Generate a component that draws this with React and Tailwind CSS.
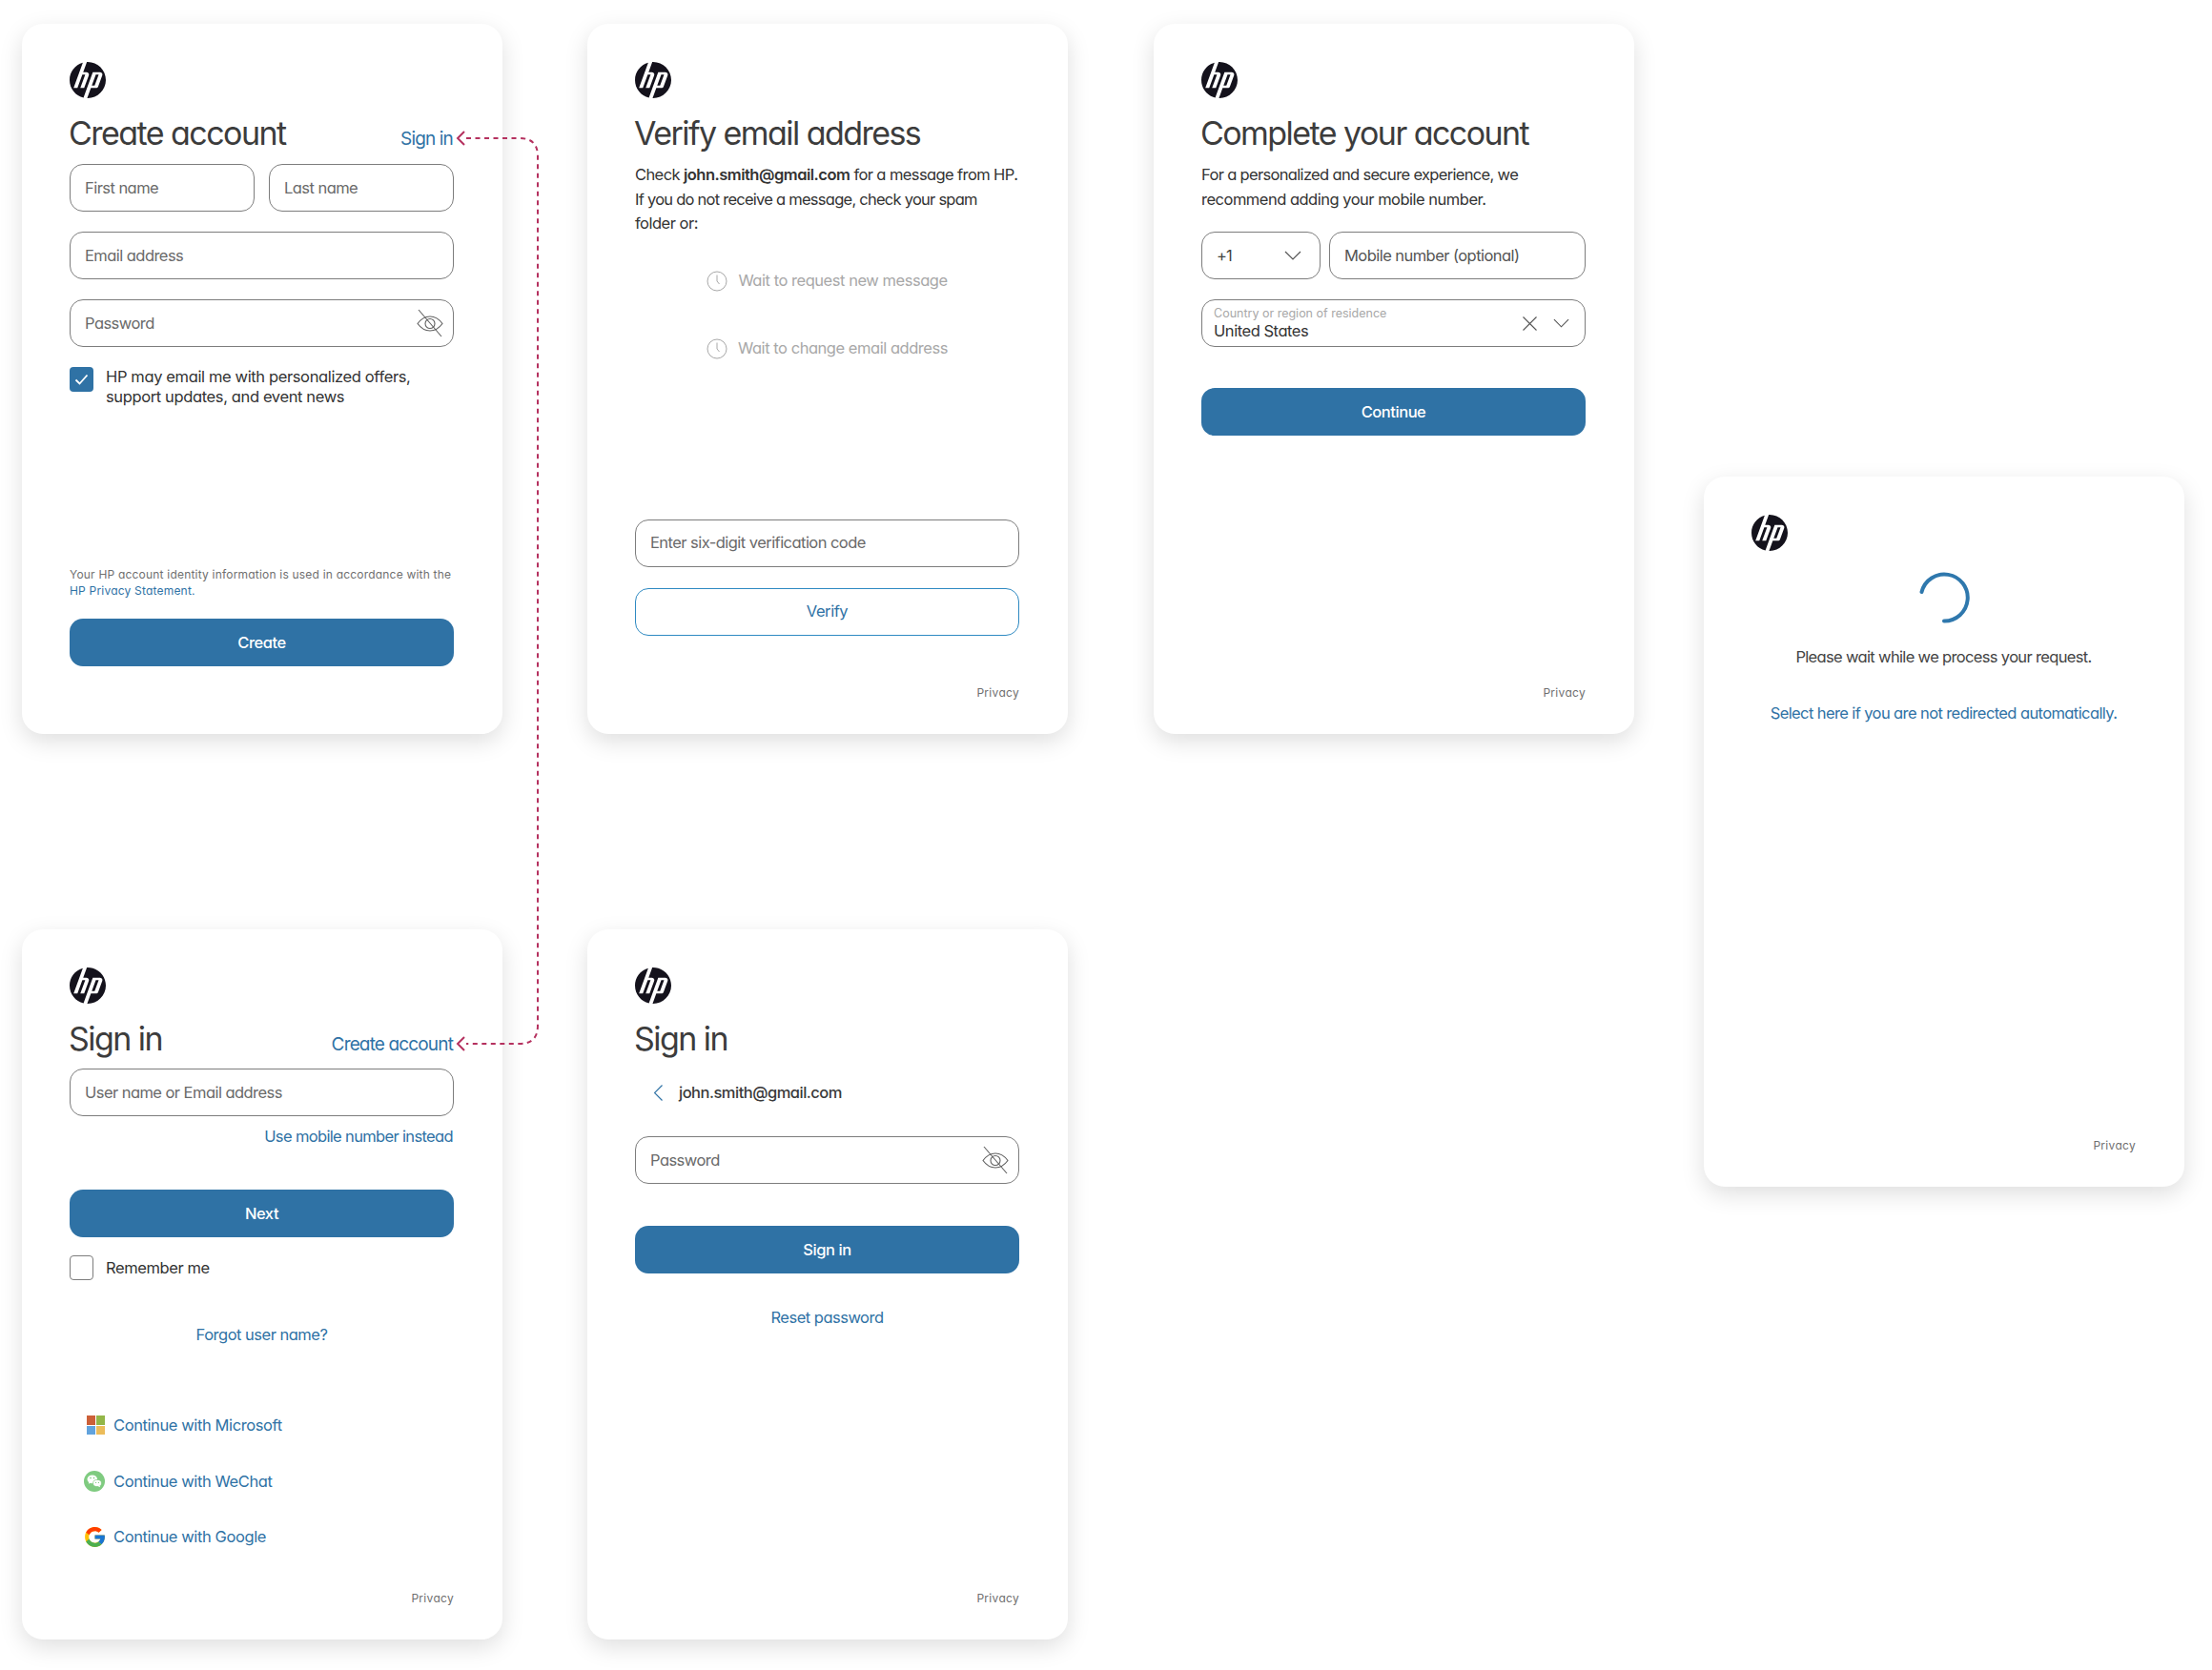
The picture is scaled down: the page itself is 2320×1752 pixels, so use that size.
import React from 'react'
import { SiHp } from 'react-icons/si'
import { FcGoogle } from 'react-icons/fc'

const Logo = () => <SiHp className="w-[38px] h-[38px] text-[#14121c] shrink-0" />

const EyeOff = () => (
  <svg className="w-[30px] h-[30px]" viewBox="0 0 30 30" fill="none" stroke="#5f5f5f" strokeWidth="1.1">
    <path d="M2 15.5C6 10 10 8 15 8s9 2 13 7.5c-4 5.500-8 7.500-13 7.500S6 21 2 15.500z" />
    <circle cx="15" cy="15.500" r="5" />
    <path d="M3 1l24 28" />
  </svg>
)

const Chevron = ({ className }) => (
  <svg className={className} viewBox="0 0 18 10" fill="none" stroke="#555" strokeWidth="1.200">
    <path d="M1 1l8 8 8-8" />
  </svg>
)

const Clock = () => (
  <svg className="w-[22px] h-[22px] shrink-0" viewBox="0 0 22 22" fill="none" stroke="#a8a8a8" strokeWidth="1">
    <circle cx="11" cy="11" r="10" />
    <path d="M11 4.500v6.500l2.500 3" />
  </svg>
)

const Microsoft = () => (
  <div className="w-[19px] h-[20px] grid grid-cols-2 grid-rows-2 gap-px shrink-0">
    <div className="bg-[#cc6038]" />
    <div className="bg-[#93b648]" />
    <div className="bg-[#62a3dd]" />
    <div className="bg-[#ecbc5a]" />
  </div>
)

const WeChat = () => (
  <svg className="w-[22px] h-[22px] shrink-0" viewBox="0 0 22 22">
    <circle cx="11" cy="11" r="11" fill="#7fcb80" />
    <ellipse cx="8.800" cy="8.800" rx="5.300" ry="4.400" fill="#fff" />
    <path d="M5.500 11.500l-.7 2.300 2.600-1.300z" fill="#fff" />
    <ellipse cx="14" cy="13" rx="4.400" ry="3.600" fill="#fff" stroke="#7fcb80" strokeWidth=".7" />
    <path d="M16.500 15.500l.7 1.800-2.300-1.100z" fill="#fff" />
    <circle cx="7" cy="7.600" r=".8" fill="#7fcb80" />
    <circle cx="10.500" cy="7.600" r=".8" fill="#7fcb80" />
    <circle cx="12.600" cy="12.400" r=".6" fill="#7fcb80" />
    <circle cx="15.400" cy="12.400" r=".6" fill="#7fcb80" />
  </svg>
)

const Heading = ({ children, link }) => (
  <div className="mt-[15px] h-[44px] flex justify-between items-baseline">
    <h1 className="text-[34px] leading-[44px] font-normal text-[#3c3c3c] tracking-[-1.55px] -ml-px">{children}</h1>
    {link && <a className="text-[19px] leading-[24px] text-[#2f72a5] tracking-[-0.85px] pr-px">{link}</a>}
  </div>
)

const Field = ({ label, className = '', children }) => (
  <div className={`h-[50px] border border-[#7d7d7d] rounded-[14px] pl-[15px] pr-[9px] flex items-center justify-between text-[16.500px] text-[#6a6a6a] tracking-[-0.55px] ${className}`}>
    <span>{label}</span>
    {children}
  </div>
)

const Button = ({ children, className = '' }) => (
  <button className={`w-full h-[50px] rounded-[14px] bg-[#2f72a5] text-white text-[16.500px] font-medium tracking-[-0.45px] ${className}`}>
    {children}
  </button>
)

const Privacy = () => (
  <div className="mt-auto text-right text-[12px] leading-[16px] tracking-[0.3px] text-[#6f6f6f]">Privacy</div>
)

const Card = ({ children, className = '' }) => (
  <div className={`w-[504px] h-[745px] bg-white rounded-[22px] shadow-[0_8px_24px_rgba(0,0,0,0.13)] pl-[50px] pr-[51px] pt-[40px] pb-[35px] flex flex-col ${className}`}>
    {children}
  </div>
)

const Check = () => (
  <div className="w-[25px] h-[26px] rounded-[4px] bg-[#2f72a5] flex items-center justify-center shrink-0">
    <svg className="w-[15px] h-[12px]" viewBox="0 0 15 12" fill="none" stroke="#fff" strokeWidth="1.800">
      <path d="M1.500 6.500l4 4 8-9" />
    </svg>
  </div>
)

const Social = ({ icon, label, className = '' }) => (
  <div className={`h-[24px] pl-[15px] flex items-center text-[16.500px] text-[#2f72a5] tracking-[-0.4px] ${className}`}>
    <span className="w-[22px] mr-[9px] flex justify-end">{icon}</span>
    {label}
  </div>
)

const Arrows = () => (
  <svg className="absolute inset-0 pointer-events-none" width="2320" height="1752" fill="none" stroke="#b5315f">
    <path d="M489 145H545Q564 145 564 164V1076Q564 1095 545 1095H489" strokeWidth="2" strokeDasharray="5 4.500" />
    <path d="M487 138l-7 7 7 7M487 1088l-7 7 7 7" strokeWidth="2" />
  </svg>
)

export default function App() {
  return (
    <div className="relative w-[2320px] h-[1752px] bg-white overflow-hidden pl-[23px] pt-[25px] flex font-['Inter','Noto_Sans',sans-serif] [font-feature-settings:'cv11']">
      <div className="grid grid-cols-[503px_504px_504px] gap-x-[90px] gap-y-[205px] content-start">
        <Card>
          <Logo />
          <Heading link="Sign in">Create account</Heading>
          <div className="mt-[10px] grid grid-cols-2 gap-[15px]">
            <Field label="First name" />
            <Field label="Last name" />
          </div>
          <Field label="Email address" className="mt-[21px]" />
          <Field label="Password" className="mt-[21px]"><EyeOff /></Field>
          <div className="mt-[21px] flex gap-[13px]">
            <Check />
            <p className="text-[16.500px] leading-[21px] text-[#333] tracking-[-0.37px]">
              HP may email me with personalized offers,<br />support updates, and event news
            </p>
          </div>
          <p className="mt-auto text-[12px] leading-[17px] tracking-[0.2px] text-[#6f6f6f]">
            Your HP account identity information is used in accordance with the<br />
            <a className="text-[#2f72a5]">HP Privacy Statement.</a>
          </p>
          <Button className="mt-[21px] mb-[36px]">Create</Button>
        </Card>

        <Card>
          <Logo />
          <Heading>Verify email address</Heading>
          <p className="mt-[9px] text-[16.500px] leading-[25.500px] text-[#333] tracking-[-0.5px] whitespace-nowrap">
            <span className="tracking-[-0.6px]">Check <b className="font-semibold tracking-[-0.5px]">john.smith@gmail.com</b> for a message from HP.</span><br />
            <span className="tracking-[-0.75px]">If you do not receive a message, check your spam</span><br />folder or:
          </p>
          <div className="mt-[35px] flex justify-center items-center gap-[11px] h-[24px] text-[16.500px] text-[#a8a8a8] tracking-[-0.46px]">
            <Clock />Wait to request new message
          </div>
          <div className="mt-[47px] flex justify-center items-center gap-[11px] h-[24px] text-[16.500px] text-[#a8a8a8] tracking-[-0.46px]">
            <Clock />Wait to change email address
          </div>
          <Field label="Enter six-digit verification code" className="mt-[167px]" />
          <button className="mt-[22px] w-full h-[50px] rounded-[14px] border border-[#2f8ac2] text-[#2f72a5] text-[16.500px] tracking-[-0.45px]">
            Verify
          </button>
          <Privacy />
        </Card>

        <Card>
          <Logo />
          <Heading>Complete your account</Heading>
          <p className="mt-[9px] text-[16.500px] leading-[25.500px] text-[#333] tracking-[-0.5px] whitespace-nowrap">
            <span className="tracking-[-0.67px]">For a personalized and secure experience, we</span><br />recommend adding your mobile number.
          </p>
          <div className="mt-[21px] flex gap-[9px]">
            <Field label="+1" className="w-[125px] shrink-0 text-[#444] pr-[19px] tracking-[-1px]">
              <Chevron className="w-[18px] h-[10px]" />
            </Field>
            <Field label="Mobile number (optional)" className="flex-1 text-[#555] tracking-[-0.45px]" />
          </div>
          <div className="mt-[21px] h-[50px] border border-[#7d7d7d] rounded-[14px] pl-[12px] pr-[16px] flex items-center justify-between">
            <div>
              <div className="text-[12.500px] leading-[16px] text-[#a8a8a8] tracking-[0px]">Country or region of residence</div>
              <div className="text-[16.500px] leading-[20px] text-[#333] tracking-[-0.45px]">United States</div>
            </div>
            <div className="flex items-center gap-[17px]">
              <svg className="w-[15px] h-[15px]" viewBox="0 0 15 15" stroke="#555" strokeWidth="1.100">
                <path d="M0.500 0.500l14 14M14.500 0.500l-14 14" />
              </svg>
              <Chevron className="w-[17px] h-[10px]" />
            </div>
          </div>
          <Button className="mt-[43px]">Continue</Button>
          <Privacy />
        </Card>

        <Card>
          <Logo />
          <Heading link="Create account">Sign in</Heading>
          <Field label="User name or Email address" className="mt-[9px]" />
          <a className="mt-[9px] h-[24px] pr-px text-right text-[16.500px] leading-[24px] text-[#2f72a5] tracking-[-0.65px]">Use mobile number instead</a>
          <Button className="mt-[44px]">Next</Button>
          <div className="mt-[19px] flex items-center gap-[13px]">
            <div className="w-[25px] h-[26px] rounded-[4px] border border-[#7d7d7d] shrink-0" />
            <span className="text-[16.500px] text-[#333] tracking-[-0.4px]">Remember me</span>
          </div>
          <a className="mt-[45px] h-[24px] text-center text-[16.500px] leading-[24px] text-[#2f72a5] tracking-[-0.5px]">Forgot user name?</a>
          <Social className="mt-[71px]" icon={<Microsoft />} label="Continue with Microsoft" />
          <Social className="mt-[35px]" icon={<WeChat />} label="Continue with WeChat" />
          <Social className="mt-[34px]" icon={<FcGoogle className="w-[25px] h-[25px] shrink-0 -mr-[2px]" />} label="Continue with Google" />
          <Privacy />
        </Card>

        <Card>
          <Logo />
          <Heading>Sign in</Heading>
          <div className="mt-[22px] h-[24px] pl-[20px] flex items-center gap-[17px] text-[16.500px] font-medium text-[#3a3a3a] tracking-[-0.5px]">
            <svg className="w-[9px] h-[17px]" viewBox="0 0 9 17" fill="none" stroke="#2f72a5" strokeWidth="1.200">
              <path d="M8.500 0.500l-8 8 8 8" />
            </svg>
            john.smith@gmail.com
          </div>
          <Field label="Password" className="mt-[34px]"><EyeOff /></Field>
          <Button className="mt-[44px]">Sign in</Button>
          <a className="mt-[34px] h-[24px] text-center text-[16.500px] leading-[24px] text-[#2f72a5] tracking-[-0.5px]">Reset password</a>
          <Privacy />
        </Card>
      </div>

      <Card className="ml-[73px] mt-[475px]">
        <Logo />
        <svg className="self-center mt-[22px] w-[54px] h-[54px]" viewBox="0 0 54 54" fill="none" stroke="#2f78ad" strokeWidth="4" strokeLinecap="round">
          <path d="M3.500 21A24.500 24.500 0 1 1 27 51.500" />
        </svg>
        <p className="mt-[23px] text-center text-[16.500px] leading-[24px] text-[#444] tracking-[-0.66px]">Please wait while we process your request.</p>
        <a className="mt-[35px] text-center text-[16.500px] leading-[24px] text-[#2f72a5] tracking-[-0.6px]">Select here if you are not redirected automatically.</a>
        <Privacy />
      </Card>

      <Arrows />
    </div>
  )
}
